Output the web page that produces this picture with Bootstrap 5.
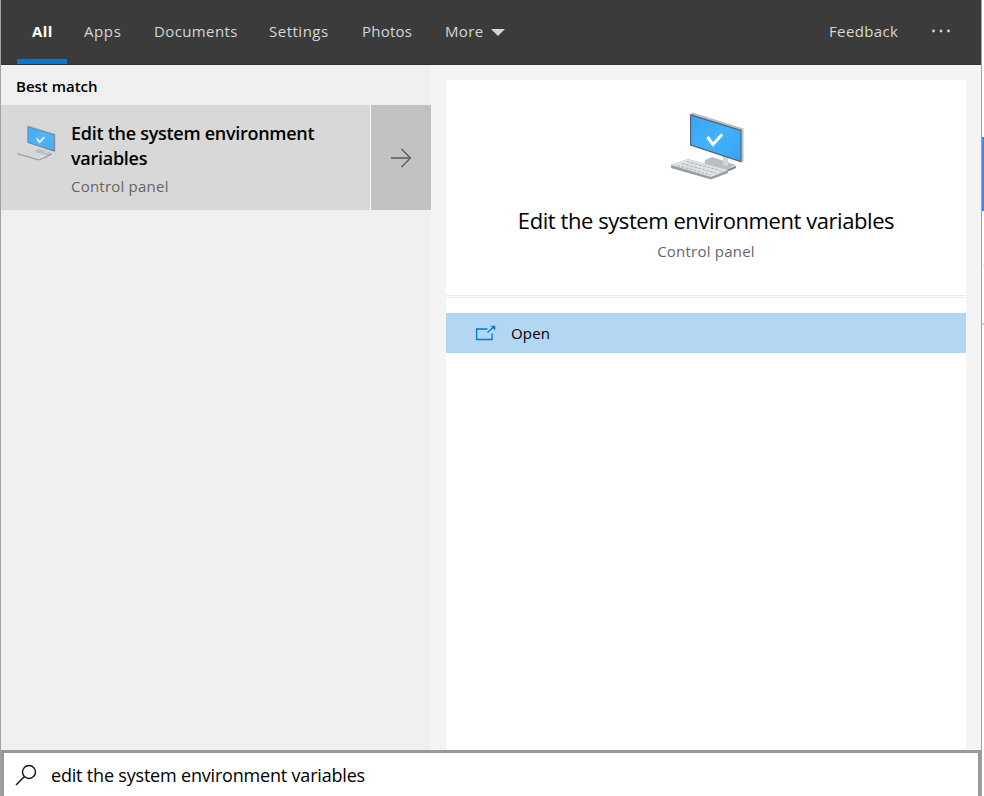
<!DOCTYPE html>
<html lang="en">
<head>
<meta charset="utf-8">
<meta name="viewport" content="width=device-width, initial-scale=1">
<title>Search</title>
<link rel="stylesheet" href="https://cdn.jsdelivr.net/npm/bootstrap@5.3.0/dist/css/bootstrap.min.css">
<style>
  body { font-family: "Segoe UI", "Open Sans", "Noto Sans", sans-serif; font-size: 15px; line-height: 20px; color: #000; background: #fff; overflow: hidden; }
  .flyout { width: 982px; height: 796px; border-left: 1px solid #a3a3a3; border-right: 1px solid #a3a3a3; }
  .topbar { height: 65px; background: #3b3b3b; color: #d6d6d6; padding-left: 15px; border-bottom: 1px solid #323232; }
  .topbar .nav-link { height: 64px; padding: 21px 0 0 16px; color: #d6d6d6; white-space: nowrap; line-height: 20px; letter-spacing: .38px; }
  .topbar .nav-link.active { color: #fff; font-weight: 700; position: relative; }
  .topbar .nav-link.active::after { content: ""; position: absolute; left: 1px; bottom: 0; width: 50px; height: 5px; background: #0078d7; }
  .topbar .w-photos { width: 83px; letter-spacing: .25px; }
  .w-all { width: 52px; } .w-docs { width: 115px; } .w-feed { width: 119px; }
  .topbar .w-apps { width: 70px; letter-spacing: .6px; }
  .topbar .w-set { width: 93px; letter-spacing: .5px; }
  .results { width: 430px; background: #efefef; }
  .heading { height: 40px; padding: 11px 0 0 15px; font-weight: 600; }
  .hit { height: 105px; background: #fafafa; }
  .hit-main { width: 369px; background: #d8d8d8; padding: 16px 0 0 15px; }
  .hit-title { font-size: 18px; line-height: 25px; font-weight: 600; letter-spacing: -.28px; }
  .hit-go { width: 60px; background: #c2c2c2; }
  .pc-small { width: 40px; height: 37px; margin: 4px 14px 0 1px; opacity: .9; }
  .muted { color: #666; letter-spacing: .22px; margin-top: 5px; }
  .preview { background: #f4f4f4; padding: 15px 15px 0; }
  .summary { height: 218px; padding-top: 32px; border-bottom: 3px double #ededed; }
  .pc-large { width: 76px; height: 70px; position: relative; left: 2px; }
  .preview-title { font-size: 22px; line-height: 30px; margin-top: 23px; letter-spacing: -.43px; }
  .summary .muted { margin-top: 6px; }
  .open-row { height: 40px; margin-top: 15px; background: #b3d6f2; padding-left: 29px; }
  .open-label { margin-left: 15px; letter-spacing: .2px; }
  .searchbox { height: 46px; border: 3px solid #999; border-bottom: 0; background: #fff; padding-left: 11px; font-size: 18px; letter-spacing: -.19px; }
  .search-text { margin-left: 14px; }
  .behind { width: 2px; height: 796px; padding-top: 137px; }
  .behind-blue { height: 74px; background: #4285f4; }
  .behind-card { height: 60px; margin-top: 54px; border-top: 1px solid #e2e2e2; border-bottom: 2px solid #ccc; }
</style>
</head>
<body class="d-flex">
<svg class="flex-shrink-0" width="0" height="0" aria-hidden="true">
  <defs>
    <linearGradient id="screen" x1="0" y1="0" x2="1" y2="1"><stop offset="0" stop-color="#38a5f5"/><stop offset=".5" stop-color="#43b2fb"/><stop offset="1" stop-color="#36a4f6"/></linearGradient>
  </defs>
  <symbol id="pc" viewBox="0 0 76 70">
    <path d="M35 48l7-3 24 8-10 5-21-6z" fill="#b8bfc4"/>
    <path d="M35 52l21 6 10-4v2l-10 4-21-6z" fill="#777e84"/>
    <path d="M53 43l5 2v9l-5-1z" fill="#d3d6d8"/>
    <path d="M20.500 2l2-1.500 51 16v32.500l-1.500 1.500z" fill="#b9bec2"/>
    <path d="M20 2l51.500 16v32.500L20 33.500z" fill="#55646e"/>
    <path d="M21.200 3.700l49.200 15.300v29.700L21.200 32.600z" fill="url(#screen)"/>
    <path d="M37.500 25l5.500 7.500 9-10" fill="none" stroke="#fff" stroke-width="3"/>
    <path d="M1 53l17-6 40 11v3l-17 6.500L1 56z" fill="#989ea3"/>
    <path d="M1 53l17-6 40 11-17 7z" fill="#e0e3e5"/>
    <path d="M7 53.500l34 9.500M12 51.500l34 9.500M17 49.500l35 9.500" fill="none" stroke="#b5babf" stroke-width="1.200" stroke-dasharray="3 1.200"/>
  </symbol>
</svg>
<main class="flyout d-flex flex-column flex-shrink-0">
  <nav class="topbar d-flex flex-shrink-0">
    <div class="nav flex-nowrap flex-grow-1">
      <a class="nav-link active w-all" href="#">All</a>
      <a class="nav-link w-apps" href="#">Apps</a>
      <a class="nav-link w-docs" href="#">Documents</a>
      <a class="nav-link w-set" href="#">Settings</a>
      <a class="nav-link w-photos" href="#">Photos</a>
      <a class="nav-link d-flex" href="#"><span>More</span><svg class="mt-2" width="21" height="7"><path d="M7 0h14L14 7z" fill="#d6d6d6"/></svg></a>
    </div>
    <a class="nav-link w-feed" href="#">Feedback</a>
    <a class="nav-link p-0 d-flex" href="#" aria-label="Options"><svg width="49" height="62"><g fill="#d6d6d6"><circle cx="1.500" cy="31" r="1.400"/><circle cx="9" cy="31" r="1.400"/><circle cx="16.500" cy="31" r="1.400"/></g></svg></a>
  </nav>
  <div class="d-flex flex-grow-1">
    <section class="results flex-shrink-0">
      <div class="heading">Best match</div>
      <div class="hit d-flex justify-content-between">
        <div class="hit-main d-flex">
          <svg class="pc-small flex-shrink-0"><use href="#pc"/></svg>
          <div>
            <div class="hit-title">Edit the system environment<br>variables</div>
            <div class="muted">Control panel</div>
          </div>
        </div>
        <div class="hit-go d-flex align-items-center justify-content-center"><svg width="22" height="20" fill="none" stroke="#555" stroke-width="1.200"><path d="M11.500 1l9 9-9 9"/><path d="M1 10h19.500" stroke="#6a6a6a" stroke-width="1.800"/></svg></div>
      </div>
    </section>
    <section class="preview flex-grow-1 d-flex">
      <div class="bg-white flex-grow-1">
        <div class="summary text-center">
          <svg class="pc-large d-block mx-auto"><use href="#pc"/></svg>
          <div class="preview-title">Edit the system environment variables</div>
          <div class="muted">Control panel</div>
        </div>
        <div class="open-row d-flex align-items-center">
          <svg width="21" height="17" fill="none" stroke="#0078d7" stroke-width="1.300"><path d="M12.500 4H1.600v10.500h15.500V8.500M12.500 7.500l5.500-5"/><path d="M15.500.8h4.700v4.700z" fill="#0078d7" stroke="none"/></svg>
          <span class="open-label">Open</span>
        </div>
      </div>
    </section>
  </div>
  <div class="searchbox d-flex align-items-center flex-shrink-0">
    <svg width="22" height="22" fill="none" stroke="#111" stroke-width="1.400"><circle cx="14" cy="8" r="6.500"/><path d="M9.500 12.500L1 21"/></svg>
    <span class="search-text">edit the system environment variables</span>
  </div>
</main>
<div class="behind"><div class="behind-blue"></div><div class="behind-card"></div></div>
<script src="https://cdn.jsdelivr.net/npm/bootstrap@5.3.0/dist/js/bootstrap.bundle.min.js"></script>
</body>
</html>
